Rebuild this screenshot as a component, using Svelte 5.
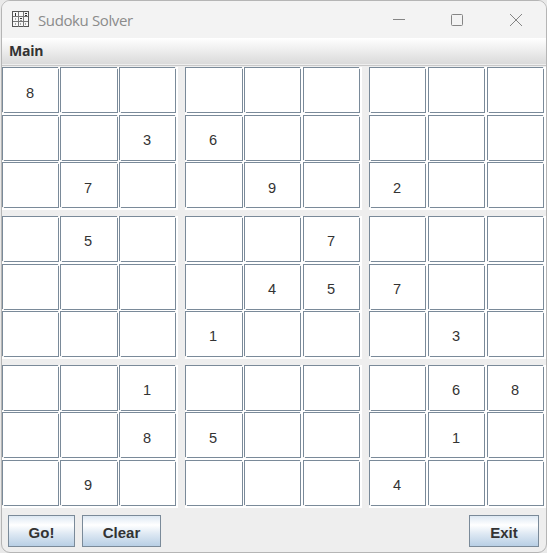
<script>
  const rows = [
    '8........',
    '..36.....',
    '.7..9.2..',
    '.5...7...',
    '....457..',
    '...1...3.',
    '..1....68',
    '..85...1.',
    '.9....4..'
  ];
  const bands = [0, 1, 2];
  const lowRows = [0, 2, 7];
</script>

<div class="desktop">
  <div class="window">
    <header>
      <svg class="logo" width="17" height="17" viewBox="0 0 17 17">
        <rect x=".5" y=".5" width="16" height="15" fill="#f7f7f7" stroke="#555" />
        <path d="M6.5 1v15M11.5 1v15M1 5.5h15M1 10.5h15" stroke="#777" fill="none" />
        <path d="M3.5 2v3M13 2.5h2M13 4.5h2M8 7.5h2M9.5 7v1M8.5 9.5h1" stroke="#333" fill="none" />
        <path d="M3.5 12v2M8.5 12v2M13.5 12v2M3.5 7v2" stroke="#aaa" fill="none" />
      </svg>
      <span class="title">Sudoku Solver</span>
      <svg class="controls" width="132" height="16" viewBox="0 0 132 16" fill="none" stroke="#858585">
        <path d="M1 7.5h12" />
        <rect x="59.5" y="2.5" width="11" height="11" rx="1" />
        <path d="M118 2l12 12M130 2l-12 12" />
      </svg>
    </header>
    <nav>Main</nav>
    <main>
      {#each bands as b}
        <div class="band">
          {#each bands as s}
            <div class="block">
              {#each bands as r}
                {#each bands as c}
                  {@const v = rows[b * 3 + r][s * 3 + c]}
                  <div class="cell" class:low={lowRows.includes(b * 3 + r)}>{v === '.' ? '' : v}</div>
                {/each}
              {/each}
            </div>
          {/each}
        </div>
      {/each}
    </main>
    <footer>
      <button class="go">Go!</button>
      <button class="clear">Clear</button>
      <button class="exit">Exit</button>
    </footer>
  </div>
</div>

<style>
  .desktop {
    width: 547px;
    height: 553px;
    box-sizing: border-box;
    padding-left: 1px;
    background: #e9e9e9;
    overflow: hidden;
    font-family: "Liberation Sans", Arial, sans-serif;
    color: #333;
  }
  .window {
    width: 546px;
    height: 553px;
    box-sizing: border-box;
    border: 1px solid #b5b5b5;
    border-radius: 9px;
    background: #eee;
    overflow: hidden;
    display: flex;
    flex-direction: column;
  }
  header {
    height: 37px;
    flex: none;
    background: #f3f3f3;
    display: flex;
    align-items: center;
    padding-left: 10px;
  }
  .logo { display: block; }
  .title {
    font: 15px/20px "Open Sans", "Noto Sans", sans-serif;
    letter-spacing: -0.38px;
    color: #8b8b8b;
    margin: 0 0 0 9px;
    width: 120px;
    white-space: nowrap;
  }
  .controls { margin-left: auto; margin-right: 22px; }
  nav {
    height: 28px;
    flex: none;
    box-sizing: border-box;
    padding-left: 7px;
    margin-bottom: 1px;
    border-bottom: 1px solid #c8c8c8;
    background: linear-gradient(#fff, #dadada 26px, #eee 26px);
    font: bold 14px/26px "Open Sans", "Noto Sans", sans-serif;
    letter-spacing: -0.2px;
  }
  main {
    display: flex;
    flex-direction: column;
    gap: 6px;
    flex: none;
  }
  .band { display: flex; gap: 7px; }
  .block {
    display: grid;
    grid-template-columns: 58px 59px 59px;
    grid-template-rows: 48px 47px 48px;
    background: #fff;
  }
  .block + .block { grid-template-columns: 59px 59px 59px; }
  .band:last-child .block { grid-template-rows: 47px 48px 48px; }
  .cell {
    position: relative;
    width: 57px;
    height: 46px;
    box-sizing: border-box;
    padding-right: 1px;
    border: 1px solid #7a8a99;
    background: #fff;
    font-size: 14.6px;
    line-height: 48px;
    text-align: center;
  }
  .cell.low { line-height: 50px; }
  .block:first-child .cell:nth-child(3n + 2) { width: 58px; padding-right: 2px; }
  .block:nth-child(2) .cell:nth-child(3n + 1) { width: 58px; padding-right: 2px; }
  .cell::before,
  .cell::after {
    content: "";
    position: absolute;
    background: #f1f1f1;
  }
  .cell::before { top: -1px; right: -1px; width: 1px; height: 2px; }
  .cell::after { bottom: -1px; left: -1px; width: 2px; height: 1px; }
  footer { display: flex; padding: 7px 7px 0 6px; gap: 7px; }
  button {
    height: 32px;
    box-sizing: border-box;
    padding: 3px 0 0;
    border: 1px solid #7a8a99;
    background: linear-gradient(#dde8f3, #fff 30%, #dde8f3 60%, #b8cfe5);
    font: bold 15px/27px "Liberation Sans", Arial, sans-serif;
    color: #333;
  }
  .go { width: 67px; }
  .clear { width: 79px; }
  .exit { width: 70px; margin-left: auto; }
</style>
